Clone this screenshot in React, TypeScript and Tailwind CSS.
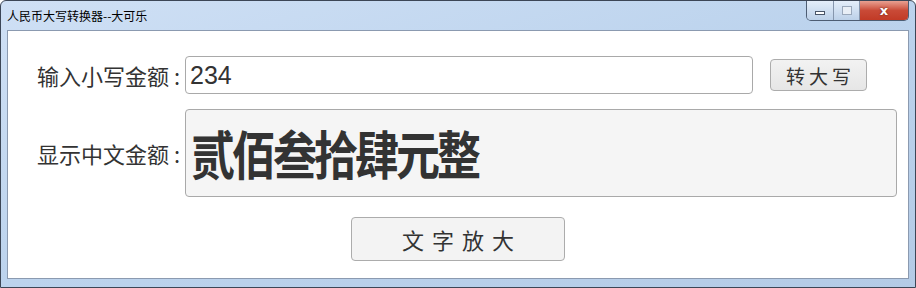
const cjk = { fontFamily: '"Microsoft YaHei", "Noto Sans CJK SC", sans-serif' };

function TitleButtons() {
  return (
    <div className="flex h-[20px] self-start rounded-b-[5px] border border-t-0 border-[#4d5d73] overflow-hidden">
      <div className="w-[27px] h-full flex items-center justify-center bg-gradient-to-b from-[#e4eefa] to-[#bcd0e8] border-r border-[#8696ad]">
        <div className="w-[10px] h-[4px] bg-white border border-[#4a5568] mt-[5px]" />
      </div>
      <div className="w-[26px] h-full flex items-center justify-center bg-gradient-to-b from-[#e4eefa] to-[#bcd0e8] border-r border-[#8696ad]">
        <div className="w-[10px] h-[9px] border border-[#9aa8bb] bg-[#e8eef6]" />
      </div>
      <div className="w-[48px] h-full flex items-center justify-center bg-gradient-to-b from-[#e8a092] via-[#c94a37] to-[#c13a26]">
        <span
          className="text-white font-bold text-[13px] leading-none"
          style={{ fontFamily: '"DejaVu Sans", sans-serif', textShadow: "0 0 2px #5a1a10" }}
        >
          x
        </span>
      </div>
    </div>
  );
}

export default function App() {
  return (
    <div
      className="w-[916px] h-[288px] flex flex-col rounded-t-[6px] border border-[#3c4656] bg-gradient-to-br from-[#cfe0f5] via-[#bcd3ed] to-[#b4cbe6] text-[#333]"
      style={cjk}
    >
      {/* Title bar */}
      <div className="h-[29px] flex items-start justify-between pl-[6px] pr-[6px]">
        <span className="text-[12px] leading-none text-black mt-[9px]">人民币大写转换器--大可乐</span>
        <TitleButtons />
      </div>

      {/* Client area */}
      <div className="mx-[6px] h-[249px] border border-[#8b9ab0] bg-white flex flex-col pt-[25px]">
        <div className="flex items-center pl-[29px]">
          <span className="w-[148px] text-[22px] leading-none text-[#333] whitespace-nowrap">输入小写金额 :</span>
          <div className="w-[568px] h-[38px] rounded-[4px] border border-[#a9a9a9] flex items-center pl-[4px]">
            <span className="text-[25px] leading-none text-[#333]" style={{ fontFamily: '"Liberation Sans", Arial, sans-serif' }}>
              234
            </span>
          </div>
          <button className="ml-[17px] w-[97px] h-[32px] rounded-[4px] border border-[#acacac] bg-gradient-to-b from-[#f2f2f2] to-[#e6e6e6] text-[19px] tracking-[4px] pl-[4px] leading-none text-[#333]">
            转大写
          </button>
        </div>

        <div className="flex items-center pl-[29px] mt-[15px]">
          <span className="w-[148px] text-[22px] leading-none text-[#333] whitespace-nowrap">显示中文金额 :</span>
          <div className="w-[712px] h-[88px] rounded-[4px] border border-[#a9a9a9] bg-[#f5f5f5] flex items-center pl-[5px]">
            <span className="inline-block text-[44px] font-bold leading-none text-[#333] tracking-[-3px] scale-y-[1.18]">
              贰佰叁拾肆元整
            </span>
          </div>
        </div>

        <div className="flex justify-center mt-[20px]">
          <button className="w-[214px] h-[44px] rounded-[4px] border border-[#acacac] bg-[#f3f3f3] text-[22px] tracking-[8px] pl-[8px] leading-none text-[#333]">
            文字放大
          </button>
        </div>
      </div>
      <div className="flex-1" />
    </div>
  );
}
